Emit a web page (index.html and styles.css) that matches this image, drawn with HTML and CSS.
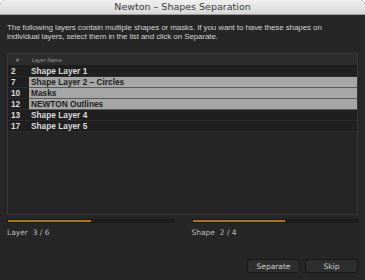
FILE: index.html
```html
<!DOCTYPE html>
<html lang="en">
<head>
    <meta charset="UTF-8">
    <title>Newton - Shapes Separation</title>
    <link rel="stylesheet" href="styles.css">
</head>
<body>
    <div class="window">
        <div class="titlebar">Newton – Shapes Separation</div>
        <div class="content">
            <p class="intro">The following layers contain multiple shapes or masks. If you want to have these shapes on individual layers, select them in the list and click on Separate.</p>

            <div class="list">
                <table>
                    <colgroup>
                        <col class="col-num">
                        <col>
                    </colgroup>
                    <tr class="head">
                        <th class="num">#</th>
                        <th class="name">Layer Name</th>
                    </tr>
                    <tr><td class="num">2</td><td>Shape Layer 1</td></tr>
                    <tr class="sel"><td class="num">7</td><td>Shape Layer 2 – Circles</td></tr>
                    <tr class="sel"><td class="num">10</td><td>Masks</td></tr>
                    <tr class="sel"><td class="num">12</td><td>NEWTON Outlines</td></tr>
                    <tr><td class="num">13</td><td>Shape Layer 4</td></tr>
                    <tr><td class="num">17</td><td>Shape Layer 5</td></tr>
                </table>
            </div>

            <div class="progress">
                <div class="prog-col">
                    <div class="bar"><div class="fill" style="width: 50.5%"></div></div>
                    <div class="prog-label">Layer&nbsp; 3 / 6</div>
                </div>
                <div class="prog-col">
                    <div class="bar"><div class="fill" style="width: 56%"></div></div>
                    <div class="prog-label">Shape&nbsp; 2 / 4</div>
                </div>
            </div>

            <div class="buttons">
                <button type="button" class="button">Separate</button>
                <button type="button" class="button">Skip</button>
            </div>
        </div>
    </div>
</body>
</html>
```

FILE: styles.css
```css
body {
    margin: 0;
    background-color: #ffffff;
    font-family: "DejaVu Sans", "Liberation Sans", sans-serif;
}
.window {
    width: 365px;
    height: 280px;
    background-color: #262626;
    border-radius: 5px 5px 0 0;
    overflow: hidden;
}
.titlebar {
    height: 14px;
    line-height: 14px;
    text-align: center;
    font-size: 9.5px;
    color: #3a3a3a;
    background: linear-gradient(#f0f0f0, #d8d8d8);
    border-bottom: 1px solid #9a9a9a;
}
.content {
    padding: 0 7px;
}
.intro {
    margin: 0;
    padding: 8px 12px 0 0;
    font-family: "Liberation Sans", Arial, sans-serif;
    font-size: 8px;
    letter-spacing: -0.1px;
    line-height: 9px;
    color: #d2d2d2;
}
.list {
    margin-top: 12px;
    height: 160px;
    border: 1px solid #383838;
    background-color: #252525;
}
.list table {
    width: 100%;
    border-collapse: collapse;
    table-layout: fixed;
    font-family: "Liberation Sans", Arial, sans-serif;
}
.col-num {
    width: 21px;
}
.list th {
    height: 11px;
    padding: 0 0 0 3px;
    font-size: 5.5px;
    font-weight: normal;
    text-align: left;
    color: #9a9a9a;
    background-color: #2c2c2c;
    border-bottom: 1px solid #1c1c1c;
}
.list th.num {
    padding-left: 8px;
}
.list td {
    height: 10px;
    padding: 0 0 0 2px;
    font-size: 8.3px;
    font-weight: bold;
    color: #dcdcdc;
    background-color: #1f1f1f;
    border-bottom: 1px solid #2a2a2a;
}
.list td.num {
    padding-left: 3px;
}
.list tr.sel td {
    background-color: #a6a6a6;
    color: #1e1e1e;
    border-bottom: 1px solid #5a5a5a;
}
.list tr.sel td.num {
    background-color: #1f1f1f;
    color: #dcdcdc;
    border-bottom: 1px solid #2a2a2a;
}
.progress {
    display: flex;
    gap: 18px;
    margin-top: 4px;
}
.prog-col {
    flex: 1;
}
.bar {
    height: 4px;
    background-color: #1e1e1e;
    border: 1px solid #1a1a1a;
    box-sizing: border-box;
}
.fill {
    height: 100%;
    background-color: #a8780e;
}
.prog-label {
    margin-top: 5px;
    font-size: 7.5px;
    color: #bcbcbc;
}
.buttons {
    display: flex;
    justify-content: flex-end;
    gap: 5px;
    margin-top: 22px;
}
.button {
    width: 53px;
    height: 14px;
    padding: 0;
    font-family: "DejaVu Sans", "Liberation Sans", sans-serif;
    font-size: 7.5px;
    color: #cfcfcf;
    background-color: #2e2e2e;
    border: 1px solid #161616;
    border-radius: 3px;
}
```
